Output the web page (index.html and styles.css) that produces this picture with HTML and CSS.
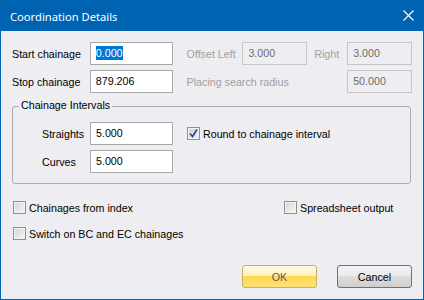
FILE: index.html
```html
<!DOCTYPE html>
<html lang="en">
<head>
    <title>Coordination Details</title>
    <meta charset="UTF-8">
    <link rel="stylesheet" href="styles.css">
</head>
<body>
    <div class="window">
        <div class="titlebar">
            <span class="title">Coordination Details</span>
            <svg class="close" width="11" height="11" viewBox="0 0 11 11">
                <path d="M0.5 0.5 L10.5 10.5 M10.5 0.5 L0.5 10.5" stroke="#fff" stroke-width="1.1" fill="none"/>
            </svg>
        </div>
        <div class="content">
            <div class="row">
                <span class="lbl lbl-main">Start chainage</span>
                <div class="field field-wide"><span class="sel">0.000</span></div>
                <span class="lbl lbl-off disabled">Offset Left</span>
                <div class="field field-small off">3.000</div>
                <span class="lbl lbl-right disabled">Right</span>
                <div class="field field-small off">3.000</div>
            </div>
            <div class="row row-next">
                <span class="lbl lbl-main">Stop chainage</span>
                <div class="field field-wide">879.206</div>
                <span class="lbl lbl-radius disabled">Placing search radius</span>
                <div class="field field-small off">50.000</div>
            </div>

            <div class="group">
                <span class="legend">Chainage Intervals</span>
                <div class="row">
                    <span class="lbl lbl-int">Straights</span>
                    <div class="field field-wide">5.000</div>
                    <span class="check check-round">
                        <span class="box checked">
                            <svg width="11" height="11" viewBox="0 0 11 11">
                                <path d="M2 5.5 L4.5 8.5 L9 1.5" stroke="#2c4a8e" stroke-width="1.7" fill="none"/>
                            </svg>
                        </span>
                        Round to chainage interval
                    </span>
                </div>
                <div class="row row-next">
                    <span class="lbl lbl-int">Curves</span>
                    <div class="field field-wide">5.000</div>
                </div>
            </div>

            <div class="opts">
                <span class="check check-index"><span class="box"></span>Chainages from index</span>
                <span class="check"><span class="box"></span>Spreadsheet output</span>
            </div>
            <div class="opts opts-next">
                <span class="check"><span class="box"></span>Switch on BC and EC chainages</span>
            </div>

            <div class="buttons">
                <button class="btn btn-ok">OK</button>
                <button class="btn btn-cancel">Cancel</button>
            </div>
        </div>
    </div>
</body>
</html>
```

FILE: styles.css
```css
body {
    margin: 0;
    padding: 0;
    background-color: #eeedf2;
    font-family: "Liberation Sans", Arial, sans-serif;
    font-size: 10.7px;
    color: #000;
}
.window {
    box-sizing: border-box;
    width: 424px;
    height: 300px;
    border: 1px solid #0063b1;
    border-top: none;
    background-color: #eeedf2;
}
.titlebar {
    height: 31px;
    margin: 0 -1px;
    background-color: #0063b1;
    color: white;
    display: flex;
    align-items: center;
    justify-content: space-between;
}
.title {
    font-family: "Noto Sans", sans-serif;
    font-size: 11.2px;
    margin-left: 10px;
    margin-top: 1px;
}
.close {
    margin-right: 10px;
}
.content {
    padding: 11px 11px 0 11px;
}
.row {
    display: flex;
    align-items: center;
    height: 23px;
}
.row-next {
    margin-top: 5px;
}
.lbl {
    white-space: nowrap;
}
.lbl-main {
    width: 78px;
}
.lbl-off {
    width: 56px;
    margin-left: 14px;
}
.lbl-right {
    width: 33px;
    margin-left: 7px;
}
.lbl-radius {
    width: 161px;
    margin-left: 14px;
}
.lbl-int {
    width: 48px;
}
.disabled {
    color: #a0a0a0;
}
.field {
    box-sizing: border-box;
    height: 23px;
    border: 1px solid #a9a9a9;
    background-color: #fff;
    padding: 0 0 0 5px;
    line-height: 21px;
}
.field-wide {
    width: 83px;
}
.field-small {
    width: 65px;
}
.field.off {
    background-color: #eeedf2;
    border-color: #c6c6c6;
    color: #6d6d6d;
}
.sel {
    background-color: #0078d7;
    color: #fff;
    padding: 1px 0;
}
/* grupa sa naslovom */
.group {
    position: relative;
    box-sizing: border-box;
    width: 399px;
    height: 78px;
    margin-top: 13px;
    border: 1px solid #acacac;
    border-radius: 3px;
    padding: 15px 0 0 29px;
}
.legend {
    position: absolute;
    top: -8px;
    left: 6px;
    padding: 0 2px;
    background-color: #eeedf2;
}
.check {
    display: flex;
    align-items: center;
    white-space: nowrap;
}
.check-round {
    margin-left: 14px;
}
.check-index {
    width: 271px;
}
.box {
    box-sizing: border-box;
    width: 13px;
    height: 13px;
    margin-right: 3px;
    border: 1px solid #8e8f8f;
    background: linear-gradient(135deg, #d2d2d2, #f8f8f8);
    box-shadow: inset 0 0 0 1px #f4f4f4;
    display: flex;
    align-items: center;
    justify-content: center;
}
.box.checked {
    background: linear-gradient(135deg, #c8d2e2, #f2f5fa);
}
.opts {
    display: flex;
    margin-top: 17px;
    padding-left: 1px;
    height: 13px;
}
.opts-next {
    margin-top: 13px;
}
.buttons {
    display: flex;
    justify-content: flex-end;
    gap: 20px;
    margin-top: 25px;
}
.btn {
    box-sizing: border-box;
    width: 75px;
    height: 23px;
    font-family: "Liberation Sans", Arial, sans-serif;
    font-size: 10.7px;
    border-radius: 3px;
    padding: 0;
}
.btn-ok {
    border: 1px solid #c9ae67;
    background: linear-gradient(#fff9e2 0%, #fff1bd 45%, #ffd84f 50%, #ffe17a 100%);
    color: #565a66;
}
.btn-cancel {
    border: 1px solid #707070;
    background: linear-gradient(#f3f3f3 0%, #ebebeb 48%, #dddddd 50%, #cfcfcf 100%);
    color: #000;
}
```
